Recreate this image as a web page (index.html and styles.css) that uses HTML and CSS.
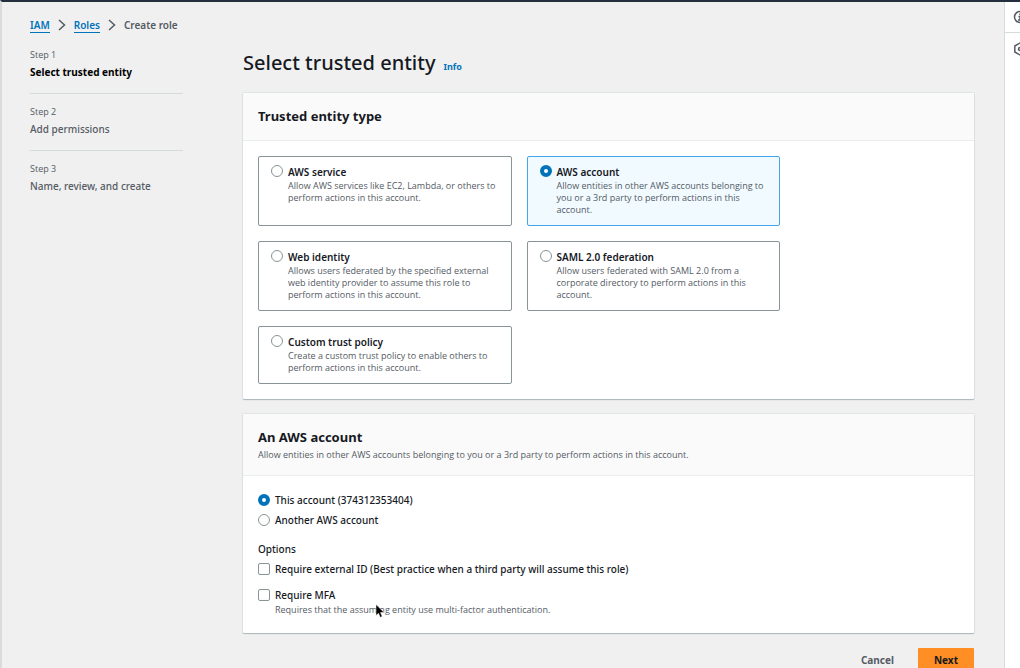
FILE: index.html
```html
<!DOCTYPE html>
<html lang="en">
<head>
<meta charset="utf-8">
<title>Create role</title>
<link rel="stylesheet" href="styles.css">
</head>
<body>
<div class="shell">
  <div class="page">
    <nav class="breadcrumbs" aria-label="Breadcrumbs">
      <a href="#iam">IAM</a>
      <svg class="chevron" viewBox="0 0 8 12" aria-hidden="true"><path d="M1 1l5.500 5L1 11"/></svg>
      <a href="#roles">Roles</a>
      <svg class="chevron" viewBox="0 0 8 12" aria-hidden="true"><path d="M1 1l5.500 5L1 11"/></svg>
      <span>Create role</span>
    </nav>
    <div class="wizard">
      <ol class="steps">
        <li class="step step-active"><small>Step 1</small><span>Select trusted entity</span></li>
        <li class="step"><small>Step 2</small><span>Add permissions</span></li>
        <li class="step"><small>Step 3</small><span>Name, review, and create</span></li>
      </ol>
      <main class="content">
        <div class="title"><h1>Select trusted entity</h1><a href="#info">Info</a></div>
        <section class="card">
          <header class="card-head"><h2>Trusted entity type</h2></header>
          <div class="card-body tiles">
            <label class="tile"><input type="radio" name="type"><span class="text"><b>AWS service</b><small>Allow AWS services like EC2, Lambda, or others to<br>perform actions in this account.</small></span></label>
            <label class="tile tile-on"><input type="radio" name="type" checked><span class="text"><b>AWS account</b><small>Allow entities in other AWS accounts belonging to<br>you or a 3rd party to perform actions in this<br>account.</small></span></label>
            <label class="tile"><input type="radio" name="type"><span class="text"><b>Web identity</b><small>Allows users federated by the specified external<br>web identity provider to assume this role to<br>perform actions in this account.</small></span></label>
            <label class="tile"><input type="radio" name="type"><span class="text"><b>SAML 2.0 federation</b><small>Allow users federated with SAML 2.0 from a<br>corporate directory to perform actions in this<br>account.</small></span></label>
            <label class="tile"><input type="radio" name="type"><span class="text"><b>Custom trust policy</b><small>Create a custom trust policy to enable others to<br>perform actions in this account.</small></span></label>
          </div>
        </section>
        <section class="card">
          <header class="card-head">
            <h2>An AWS account</h2>
            <p>Allow entities in other AWS accounts belonging to you or a 3rd party to perform actions in this account.</p>
          </header>
          <div class="card-body form">
            <label class="row"><input type="radio" name="account" checked><span>This account (374312353404)</span></label>
            <label class="row"><input type="radio" name="account"><span>Another AWS account</span></label>
            <fieldset class="options">
              <legend>Options</legend>
              <label class="row"><input type="checkbox"><span>Require external ID (Best practice when a third party will assume this role)</span></label>
              <label class="row"><input type="checkbox"><span class="mfa">Require MFA<small>Requires that the assuming entity use multi-factor authentication.
                <svg class="pointer" viewBox="0 0 10 14" aria-hidden="true"><path d="M1 0.500v11l2.500-2.300 1.700 4.100 2-.8-1.700-4h3.600z"/></svg></small></span></label>
            </fieldset>
          </div>
        </section>
        <div class="actions">
          <button type="button" class="btn">Cancel</button>
          <button type="button" class="btn btn-primary">Next</button>
        </div>
      </main>
    </div>
  </div>
  <aside class="rail">
    <button type="button" aria-label="Help"><svg viewBox="0 0 14 14" aria-hidden="true"><circle cx="7" cy="7" r="5.500"/><path d="M5.500 6.500H7V10M5 10h4M7 3.500v1.500"/></svg></button>
    <button type="button" aria-label="Settings"><svg viewBox="0 0 14 14" aria-hidden="true"><path d="M7 1l5.200 3v6L7 13l-5.200-3V4z"/><circle cx="7" cy="7" r="1.500"/></svg></button>
  </aside>
</div>
</body>
</html>
```
FILE: styles.css
```css
* { box-sizing: border-box; }
body, h1, h2, p, ol { margin: 0; padding: 0; }
body { font: 500 10px/18px "Noto Sans", "Open Sans", sans-serif; color: #16191f; background: #f0f0f0; }
a { color: #0073bb; text-decoration: none; }
small, .card-head p { font-family: "Open Sans", "Noto Sans", sans-serif; font-size: 9px; font-weight: 500; line-height: 12px; color: #545b64; }

.shell { display: flex; height: 100vh; overflow: hidden; border-top: 2px solid #232f3e; border-left: 2px solid #d9dcdc; }
.page { flex: 1; padding: 14px 30px 0 28px; }
.breadcrumbs { display: flex; align-items: center; gap: 8px; color: #545b64; font-weight: 600; }
.breadcrumbs a { line-height: 14px; border-bottom: 1px solid #0073bb; }
.chevron { width: 8px; height: 12px; fill: none; stroke: #545b64; stroke-width: 1.5; }
.wizard { display: grid; grid-template-columns: 153px 1fr; gap: 60px; }

.steps { list-style: none; padding-top: 14px; }
.step { display: flex; flex-direction: column; padding-bottom: 12px; margin-bottom: 11px; border-bottom: 1px solid #d5dbdb; color: #545b64; }
.step:last-child { border: 0; }
.step small { line-height: 14px; padding-bottom: 1px; }
.step-active span { color: #000; font-weight: 700; }

.content { display: flex; flex-direction: column; gap: 15px; }
.title { display: flex; align-items: baseline; gap: 8px; padding-top: 14px; }
.title h1 { font-size: 20px; line-height: 30px; font-weight: 500; }
.title a { font-size: 9px; font-weight: 700; }

.card { background: #fff; box-shadow: 0 1px 1px #aab7b8, 0 0 1px 1px #e0e4e4; border-radius: 1px; }
.card-head { padding: 12px 15px 13px; background: #fafafa; border-bottom: 1px solid #eaeded; }
.card-head h2 { font-size: 13px; line-height: 22px; font-weight: 700; }
.card-head p { line-height: 14px; }
.card-body { padding: 15px; }

.tiles { display: grid; grid-template-columns: repeat(2, minmax(0, 1fr)); gap: 15px; max-width: 552px; }
.tile { display: flex; gap: 5px; padding: 7px 12px 9px; border: 1px solid #879596; border-radius: 2px; }
.tile-on { background: #f1faff; border-color: #44a5e8; }
.text { display: flex; flex-direction: column; line-height: 16px; }
.text b { font-weight: 600; }
.text small { white-space: nowrap; }

input { appearance: none; flex: none; width: 12px; height: 12px; margin: 1px 0 0; border: 1px solid #879596; background: #fff; border-radius: 2px; }
input[type="radio"] { border-radius: 50%; }
input[type="radio"]:checked { border: 4px solid #0073bb; }

.form { padding-bottom: 17px; display: flex; flex-direction: column; gap: 2px; }
.row { display: flex; gap: 5px; }
.row input { margin-top: 3px; }
.options { display: flex; flex-direction: column; gap: 8px; margin: 9px 0 0; padding: 0; border: 0; }
.options legend { padding: 0 0 2px; }
.mfa { display: flex; flex-direction: column; }
.mfa small { position: relative; }
.pointer { position: absolute; left: 100px; top: 0; width: 10px; height: 14px; fill: #000; stroke: #fff; stroke-width: 0.5; }

.actions { display: flex; justify-content: flex-end; gap: 8px; }
.btn { padding: 3px 16px; border: 0; border-radius: 1px; background: none; font: inherit; font-weight: 700; color: #545b64; }
.btn-primary { background: #ff8f24; color: #16191f; }

.rail { width: 16px; background: #fff; border-left: 1px solid #d5dbdb; overflow: hidden; }
.rail button { display: block; width: 31px; height: 31px; padding: 0 8px; border: 0; border-bottom: 1px solid #d5dbdb; background: none; }
.rail button:last-child { border: 0; }
.rail svg { display: block; width: 14px; height: 14px; fill: none; stroke: #545b64; stroke-width: 1.5; }
```
